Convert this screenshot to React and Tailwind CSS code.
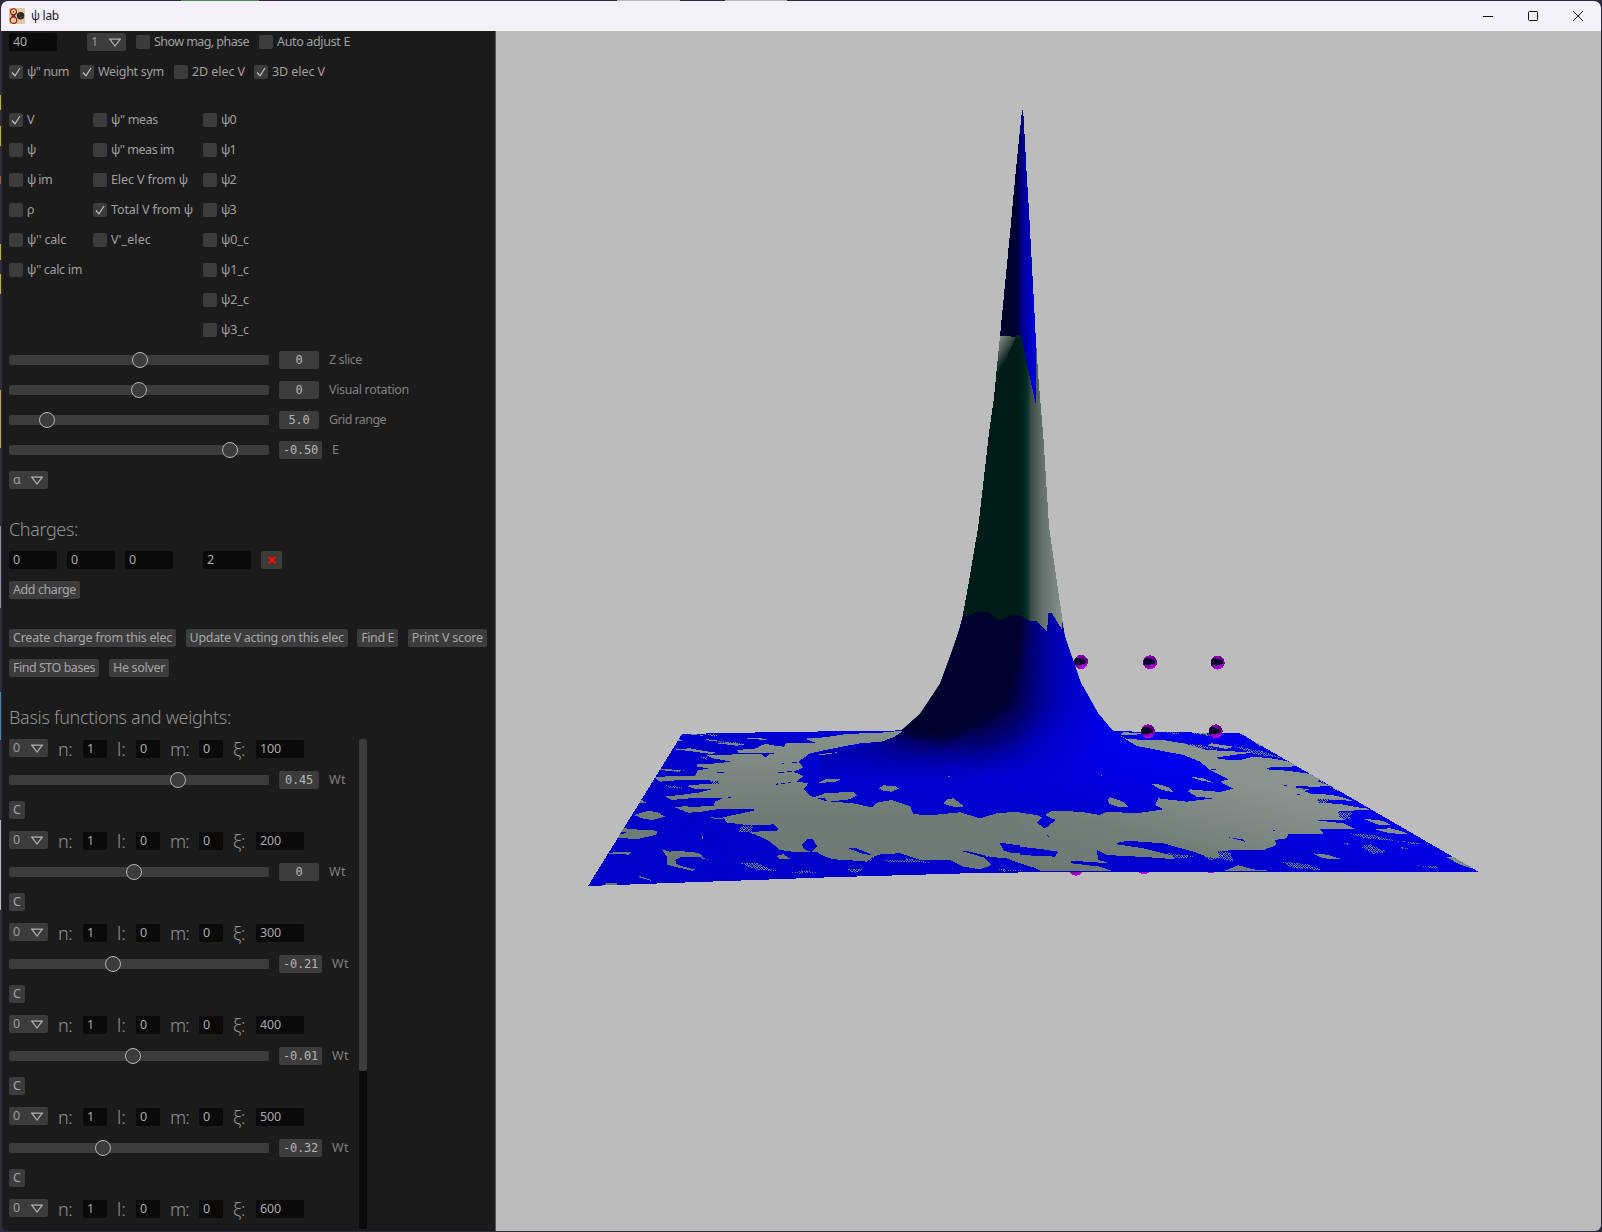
import React, { useLayoutEffect, useRef, useState } from "react";

/* Text whose tracking is tuned so that it occupies a given width. */
function Fit({ w, className = "", children }) {
  const ref = useRef(null);
  const [ls, setLs] = useState(0);
  useLayoutEffect(() => {
    const natural = ref.current.getBoundingClientRect().width;
    setLs((w - natural) / String(children).length);
  }, []);
  return (
    <span ref={ref} className={"whitespace-pre " + className} style={{ letterSpacing: ls + "px" }}>
      {children}
    </span>
  );
}

function Check({ on, label, w, className = "" }) {
  return (
    <div className={"flex h-[18px] items-center gap-1 " + className}>
      <span className="h-[14px] w-[14px] shrink-0 rounded-[2px] bg-[#3c3c3c]">
        {on && (
          <svg viewBox="0 0 14 14" className="h-[14px] w-[14px]" fill="none" stroke="#c0c0c0" strokeWidth="1.2">
            <path d="M3 7.5L6 10.8L11 3" />
          </svg>
        )}
      </span>
      <Fit w={w} className="text-[#a0a0a0]">{label}</Fit>
    </div>
  );
}

function Field({ value, w, className }) {
  return (
    <div className={"flex h-[18px] items-center rounded-[2px] bg-[#0a0a0a] pl-1 text-[#a8a8a8] " + className}>
      <Fit w={w}>{value}</Fit>
    </div>
  );
}

function Select({ value, className = "w-[39px]" }) {
  return (
    <div className={"flex h-[18px] items-center justify-between rounded-[2px] bg-[#3c3c3c] pl-1 pr-[5px] text-[#9c9c9c] " + className}>
      <Fit w={7}>{value}</Fit>
      <svg viewBox="0 0 12 9" className="h-[9px] w-[12px]" fill="none" stroke="#b0b0b0" strokeWidth="1.2">
        <path d="M0.8 1.2H11.2L6 8Z" />
      </svg>
    </div>
  );
}

function Button({ label, w, className }) {
  return (
    <button className={"flex h-[18px] items-center rounded-[2px] bg-[#3c3c3c] pl-1 text-[#a6a6a6] " + className}>
      <Fit w={w}>{label}</Fit>
    </button>
  );
}

function Slider({ at, value, label, w }) {
  const wide = value.length > 4;
  return (
    <div className="flex h-[18px] items-center gap-[10px]">
      <div className="relative h-[10px] w-[260px] rounded-[2px] bg-[#3c3c3c]">
        <span
          className="absolute top-[-3px] h-4 w-4 rounded-full border-[1.3px] border-[#b4b4b4] bg-[#3c3c3c]"
          style={{ left: at - 17 + "px" }}
        />
      </div>
      <div
        className={
          "flex h-[18px] items-center justify-center rounded-[2px] bg-[#3c3c3c] font-['DejaVu_Sans_Mono',monospace] text-[12px] text-[#b4b4b4] " +
          (wide ? "w-[43px]" : "w-[40px]")
        }
      >
        <Fit w={value.length * 7}>{value}</Fit>
      </div>
      <Fit w={w} className="text-[#808080]">{label}</Fit>
    </div>
  );
}

function Big({ w, className, children }) {
  return (
    <div className={"text-[18px] font-light leading-5 text-[#929292] " + className}>
      <Fit w={w}>{children}</Fit>
    </div>
  );
}

function Basis({ xi, at, value }) {
  return (
    <div className="flex shrink-0 flex-col gap-3">
      <div className="flex h-5 items-start">
        <Select value="0" />
        <Big w={14} className="ml-[10px] w-[25px]">n:</Big>
        <Field value="1" w={7} className="mt-px w-6" />
        <Big w={9} className="ml-[10px] w-[19px]">l:</Big>
        <Field value="0" w={7} className="mt-px w-6" />
        <Big w={19} className="ml-[10px] w-[29px]">m:</Big>
        <Field value="0" w={7} className="mt-px w-6" />
        <Big w={12} className="ml-[10px] w-[23px]">ξ:</Big>
        <Field value={xi} w={21} className="mt-px w-12" />
      </div>
      {value && <Slider at={at} value={value} label="Wt" w={17} />}
      {value && <Button label="C" w={8} className="w-4" />}
    </div>
  );
}

const columns = [
  {
    cls: "w-[84px]",
    items: [["V", 8, true], ["ψ", 9], ["ψ im", 25], ["ρ", 7], ["ψ'' calc", 39], ["ψ'' calc im", 55]],
  },
  {
    cls: "w-[110px]",
    items: [["ψ'' meas", 47], ["ψ'' meas im", 63], ["Elec V from ψ", 77], ["Total V from ψ", 82, true], ["V'_elec", 40]],
  },
  {
    cls: "w-[80px]",
    items: [["ψ0", 15], ["ψ1", 15], ["ψ2", 15], ["ψ3", 15], ["ψ0_c", 28], ["ψ1_c", 28], ["ψ2_c", 28], ["ψ3_c", 28]],
  },
];

const bases = [
  ["100", 178, "0.45"],
  ["200", 134, "0"],
  ["300", 113, "-0.21"],
  ["400", 133, "-0.01"],
  ["500", 102.5, "-0.32"],
  ["600", 0, null],
];

function Panel() {
  return (
    <div className="flex h-[1200px] w-[493px] shrink-0 flex-col rounded-bl-[6px] bg-[#1b1b1b] pl-[7px] pt-[2px] font-['Noto_Sans',sans-serif] text-[12.5px] leading-[18px]">
      <div className="flex h-[18px]">
        <Field value="40" w={14} className="w-12" />
        <Select value="1" className="ml-[30px] w-[39px]" />
        <Check label="Show mag, phase" w={95} className="ml-[10px] w-[113px]" />
        <Check label="Auto adjust E" w={73} className="ml-[10px]" />
      </div>
      <div className="mt-3 flex h-[18px]">
        <Check on label="ψ'' num" w={42} className="w-[71px]" />
        <Check on label="Weight sym" w={66} className="w-[94px]" />
        <Check label="2D elec V" w={53} className="w-[80px]" />
        <Check on label="3D elec V" w={53} />
      </div>
      <div className="mt-[30px] flex h-[228px]">
        {columns.map((c, i) => (
          <div key={i} className={"flex flex-col gap-3 " + c.cls}>
            {c.items.map(([label, w, on]) => (
              <Check key={label} label={label} w={w} on={on} />
            ))}
          </div>
        ))}
      </div>
      <div className="mt-3 flex flex-col gap-3">
        <Slider at={140} value="0" label="Z slice" w={33} />
        <Slider at={139} value="0" label="Visual rotation" w={80} />
        <Slider at={47} value="5.0" label="Grid range" w={57} />
        <Slider at={230} value="-0.50" label="E" w={7} />
        <Select value="α" />
      </div>
      <h2 className="mt-7 h-[22px] text-[18px] font-light leading-[24px] text-[#929292]">
        <Fit w={69}>Charges:</Fit>
      </h2>
      <div className="mt-3 flex h-[18px] gap-[10px]">
        <Field value="0" w={7} className="w-12" />
        <Field value="0" w={7} className="w-12" />
        <Field value="0" w={7} className="w-12" />
        <Field value="2" w={7} className="ml-5 w-12" />
        <button className="flex h-[18px] w-[21px] items-center justify-center rounded-[2px] bg-[#3c3c3c]">
          <svg viewBox="0 0 8 8" className="h-2 w-2" stroke="#f50808" strokeWidth="2.3">
            <path d="M0.8 0.8L7.2 7.2M7.2 0.8L0.8 7.2" />
          </svg>
        </button>
      </div>
      <Button label="Add charge" w={63} className="mt-3 w-[71px]" />
      <div className="mt-[30px] flex h-[18px] gap-[9.6px]">
        <Button label="Create charge from this elec" w={159} className="w-[167px]" />
        <Button label="Update V acting on this elec" w={154} className="w-[162px]" />
        <Button label="Find E" w={33} className="w-[41px]" />
        <Button label="Print V score" w={71} className="w-[79px]" />
      </div>
      <div className="mt-3 flex h-[18px] gap-[10px]">
        <Button label="Find STO bases" w={82} className="w-[90px]" />
        <Button label="He solver" w={52} className="w-[60px]" />
      </div>
      <h2 className="mt-7 h-[22px] text-[18px] font-light leading-[24px] text-[#929292]">
        <Fit w={222}>Basis functions and weights:</Fit>
      </h2>
      <div className="mt-3 flex h-[490px]">
        <div className="flex w-[350px] flex-col gap-3">
          {bases.map(([xi, at, value]) => (
            <Basis key={xi} xi={xi} at={at} value={value} />
          ))}
        </div>
        <div className="h-[490px] w-2 rounded-[2px] bg-[#0a0a0a]">
          <div className="h-[332px] w-2 rounded-[2px] bg-[#3c3c3c]" />
        </div>
      </div>
    </div>
  );
}

/* Left part of the surface, in a frame scaled 3:1 with its origin at (580,700). */
const greyLeft = [
  "970,92 905,98 800,102 735,112 675,116 710,130 620,128 612,140 590,138 560,132 545,135 530,145 470,150 475,158 540,160 470,163 380,166 400,175 450,184 420,190 350,192 352,200 385,205 352,212 345,228 290,228 222,231 240,245 300,240 420,242 415,252 340,254 320,258 345,266 395,268 360,277 300,285 255,290 275,300 350,293 430,294 405,305 400,318 350,320 285,320 320,337 365,335 410,328 520,327 522,332 470,343 430,352 440,368 480,372 500,376 530,375 590,382 590,392 505,396 540,410 570,425 600,450 650,457 710,455 730,468 760,478 800,480 860,485 880,470 905,462 960,460 1020,480 1110,480 1150,500 1200,508 1235,495 1210,472 1145,453 1220,470 1280,475 1320,490 1350,500 1410,506 1410,380 1395,385 1370,350 1310,335 1250,340 1200,355 1140,337 1060,345 1000,343 990,318 935,300 890,308 875,322 820,310 735,303 690,288 670,268 685,250 650,245 670,228 640,215 670,203 655,185 690,160 760,145 840,130 905,125 940,112",
  "285,148 330,145 380,154 408,158 395,162 335,154", "307,101 360,104 375,108", "230,205 270,208 320,214 280,214 240,210",
  "163,345 205,332 235,338 255,350 215,360 185,355", "120,378 145,387 230,392 232,400 225,405 170,418 110,412",
  "168,308 185,300 202,310", "285,322 320,318 360,330 330,340", "285,118 300,118 310,123 290,123",
  "245,447 270,456 275,452 340,456 362,462 370,473 340,470 300,472 285,480 290,492 310,500 350,510 335,512 260,494 262,472",
  "110,456 155,457 145,464 80,460", "80,550 110,549 110,555 75,555", "590,468 610,462 632,478 600,478",
  "175,531 215,543 208,538 180,528", "365,472 388,480 360,474", "490,113 540,114 560,119 510,118",
  "375,118 420,120 395,124", "410,130 440,127 495,133 470,137", "715,248 735,238 785,236 765,247", "735,295 700,292 735,280 820,275 832,286 810,298 745,305",
  "897,265 910,256 948,259 957,266 935,275 910,272", "1090,310 1103,298 1120,295 1153,319 1130,322 1110,318",
  "1103,228 1110,228 1110,231 1103,231", "715,163 780,156 750,162 718,166", "390,351 440,357 410,358",
  "1395,345 1410,336 1410,352", "366,408 370,408 370,417 366,417",
];
const blueLeft = [
  "520,384 535,376 580,373 597,388 570,394 522,392", "665,435 680,418 698,417 712,440 695,456 675,450",
  "805,445 830,445 880,466 850,462", "1258,428 1290,432 1410,450 1410,462 1290,458 1272,452",
  "545,162 567,163 556,173", "590,217 665,211 600,219", "450,187 400,187 400,184 450,184",
  "405,218 432,216 430,219", "580,253 595,250 595,254", "430,293 457,292 440,295", "905,470 960,462 1005,478 920,478",
  "1140,452 1160,453 1230,470 1190,466", "690,165 720,158 700,168", "1380,370 1410,362 1400,385",
  "505,159 582,159 582,162 505,162", "593,192 612,190 612,193", "632,187 650,186 650,189", "600,251 635,246 632,250",
  "112,398 140,396 130,402 112,403", "345,217 350,210 335,226",
];
const hatchLeft = [
  "400,123 460,126 495,133 450,136", "480,490 530,488 560,502 590,513 530,510", "905,480 1000,478 1050,488 930,486",
  "800,507 850,508 825,520", "630,517 680,512 710,518 660,521", "485,378 520,376 515,395 475,396", "1255,507 1330,512 1270,515",
  "390,240 425,242 420,256 395,250", "360,172 385,172 380,180", "370,103 430,104 400,108", "255,256 320,262 270,264",
  "680,115 705,116 700,122", "860,465 885,470 870,484", "245,206 320,212 290,216", "560,507 590,512 560,514",
];

/* Right part, same scale, origin at (1020,700). */
const greyRight = [
  "300,107 325,118 430,120 500,132 560,150 620,153 700,158 640,165 590,172 600,178 660,180 700,170 760,176 810,186 850,198 740,203 740,208 800,212 860,220 905,230 895,245 925,255 965,263 920,258 870,262 830,262 870,270 850,272 875,282 930,284 960,290 1000,303 920,298 895,297 895,308 960,312 1030,325 1070,327 1010,331 950,335 960,352 980,360 880,360 970,370 1005,387 900,387 912,403 805,402 800,415 765,420 770,435 730,450 590,452 600,475 550,470 520,460 430,430 320,422 285,432 370,445 450,465 465,478 390,472 260,465 230,450 235,480 270,490 150,482 155,490 240,500 275,512 130,512 60,512 0,480 0,338 50,345 65,352 95,333 180,335 240,345 260,335 350,340 430,328 405,315 415,295 500,305 580,295 530,290 505,275 510,268 600,276 640,266 600,245 625,238 570,210 540,185 490,165 350,138",
  "393,252 410,251 445,262 460,277 420,268", "262,300 270,292 305,303 326,320 300,322 268,312", "510,230 550,235 580,248 545,242",
  "310,97 370,99 350,104 300,106", "1065,388 1110,385 1140,392 1165,402 1110,400", "1030,356 1085,362 1112,374 1080,376",
  "1278,470 1310,472 1330,482 1355,505 1320,494", "880,460 920,464 968,478 930,478 900,472", "625,508 655,496 700,508 760,513 610,513",
  "1078,338 1120,350 1125,358 1090,348", "520,98 560,100 560,104", "575,130 640,140 620,147 560,136",
  "700,125 730,134 760,146 720,138", "745,145 790,162 760,157", "830,188 875,212 850,206", "970,281 1005,280 1035,298 1000,294",
  "930,262 985,274 960,275", "1035,320 1075,326 1050,324", "243,225 246,225 246,228 243,228",
];
const blueRight = [
  "50,368 75,345 107,360 75,386", "0,440 60,447 115,455 105,470 0,465", "625,412 670,418 675,425",
  "285,430 320,423 430,430 520,455 560,470 600,480 500,470 450,455 380,436", "735,203 800,206 870,215 800,212",
  "586,173 610,173 655,178 600,177", "570,207 620,211 580,211", "150,485 200,488 280,490 210,495",
  "80,402 90,412 80,408", "787,255 800,256 800,259", "820,260 860,258 870,264 835,265", "817,281 840,281 840,285", "650,164 668,162 668,165",
  "755,391 775,392 775,394",
];
const hatchRight = [
  "890,296 925,298 920,310 895,308", "950,335 1000,338 985,358 960,352", "590,452 630,458 640,485 600,476",
  "1020,440 1050,432 1100,456 1060,461", "785,485 860,492 905,510 820,505", "895,235 925,245 905,252",
  "990,400 1060,405 1140,425 1030,414", "1190,496 1255,500 1250,508", "820,262 870,268 850,274",
  "520,100 560,102 610,110 560,107", "640,138 720,152 790,175 700,162", "550,465 600,472 570,482", "440,458 530,470 460,476",
  "435,97 490,98 470,102", "1140,440 1170,446 1150,448", "490,130 560,138 600,150 530,142", "1140,422 1230,434 1180,432",
  "960,428 1000,432 980,434",
];

const plane = "682,734 780,732 903,730.4 1113,731.2 1240,733.3 1479,872 1050,872 967,873.3 830,877.3 663,883.3 588,886";
const mound =
  "964,612 959.3,630 950,657 940,684 920,714 903,729 892,737 880,742 850,748 820,752 820,800 1180,800 1190,765 1183,757 1160,749 1136,746 1113,731 1098,713 1081,683 1065,636.7 1062,620 1060,612";
const spheres = [[1081, 662], [1150, 662.3], [1217.7, 662.6]];
const frontSpheres = [[1148, 731.3], [1215.7, 731.3]];
const lowSpheres = [[1076, 868.7], [1144, 867.5], [1211, 866.5]];

function Ball({ c }) {
  return (
    <g transform={`translate(${c[0]} ${c[1]})`}>
      <circle r="7" fill="url(#ball)" />
      <path d="M-6.9 -1.5C-6 -4.6 -3 -5.2 0 -3.6L5.5 -1L5.2 1L-1 3L-6.2 2.6Z" fill="#05002c" />
    </g>
  );
}

function Scene() {
  return (
    <svg viewBox="496 31 1105 1200" className="block h-[1200px] w-[1105px] rounded-br-[6px] bg-[#bcbcbc]" shapeRendering="crispEdges">
      <defs>
        <linearGradient id="blue" gradientUnits="userSpaceOnUse" x1="1000" y1="875" x2="1035" y2="735">
          <stop offset="0" stopColor="#0000cb" />
          <stop offset="0.55" stopColor="#0000d0" />
          <stop offset="1" stopColor="#0000ea" />
        </linearGradient>
        <linearGradient id="grey" gradientUnits="userSpaceOnUse" x1="0" y1="500" x2="0" y2="100">
          <stop offset="0" stopColor="#6d7974" />
          <stop offset="0.4" stopColor="#707c76" />
          <stop offset="1" stopColor="#86918b" />
        </linearGradient>
        <linearGradient id="greyR" gradientUnits="userSpaceOnUse" x1="60" y1="500" x2="170" y2="100">
          <stop offset="0" stopColor="#6d7974" />
          <stop offset="0.4" stopColor="#727e78" />
          <stop offset="1" stopColor="#89948e" />
        </linearGradient>
        <linearGradient id="tip" gradientUnits="userSpaceOnUse" x1="1013" y1="0" x2="1034" y2="0">
          <stop offset="0" stopColor="#00002d" />
          <stop offset="0.2" stopColor="#00003c" />
          <stop offset="0.5" stopColor="#000098" />
          <stop offset="0.8" stopColor="#0000c0" />
          <stop offset="1" stopColor="#0000dc" />
        </linearGradient>
        <linearGradient id="body" gradientUnits="userSpaceOnUse" x1="1018" y1="0" x2="1062" y2="0">
          <stop offset="0" stopColor="#001c17" />
          <stop offset="0.16" stopColor="#002825" />
          <stop offset="0.22" stopColor="#0c302c" />
          <stop offset="0.3" stopColor="#3c4c47" />
          <stop offset="0.55" stopColor="#63706b" />
          <stop offset="1" stopColor="#86918b" />
        </linearGradient>
        <linearGradient id="wedge" gradientUnits="userSpaceOnUse" x1="997" y1="340" x2="1013" y2="351">
          <stop offset="0" stopColor="#84908a" />
          <stop offset="0.5" stopColor="#4c5955" />
          <stop offset="1" stopColor="#001c17" />
        </linearGradient>
        <linearGradient id="slope" gradientUnits="userSpaceOnUse" x1="1015" y1="0" x2="1120" y2="0">
          <stop offset="0" stopColor="#000078" />
          <stop offset="0.25" stopColor="#0000a0" />
          <stop offset="0.5" stopColor="#0000c4" />
          <stop offset="0.75" stopColor="#0000dc" />
          <stop offset="1" stopColor="#0000ee" />
        </linearGradient>
        <linearGradient id="fade" x1="0" y1="0" x2="0" y2="1">
          <stop offset="0.55" stopColor="#fff" />
          <stop offset="0.95" stopColor="#000" />
        </linearGradient>
        <mask id="fadeMask" maskUnits="userSpaceOnUse" x="800" y="600" width="400" height="200">
          <rect x="800" y="600" width="400" height="190" fill="url(#fade)" />
        </mask>
        <linearGradient id="ball" x1="0" y1="0" x2="0.3" y2="1">
          <stop offset="0" stopColor="#b400dc" />
          <stop offset="0.5" stopColor="#50006e" />
          <stop offset="1" stopColor="#b800e0" />
        </linearGradient>
        <pattern id="hatch" width="15" height="12" patternUnits="userSpaceOnUse">
          <path d="M0 0H3V3H0ZM6 0H9V3H6ZM3 3H6V6H3ZM9 3H15V6H9ZM0 6H3V9H0ZM9 6H12V9H9ZM3 9H9V12H3ZM12 9H15V12H12Z" fill="#6f7b75" />
        </pattern>
        <clipPath id="planeClip"><polygon points={plane} /></clipPath>
        <clipPath id="moundClip"><polygon points={mound} /></clipPath>
        <filter id="soft" x="-30%" y="-30%" width="160%" height="160%"><feGaussianBlur stdDeviation="5" /></filter>
        <filter id="softer" x="-40%" y="-40%" width="180%" height="180%"><feGaussianBlur stdDeviation="13" /></filter>
      </defs>

      {lowSpheres.map((c, i) => <Ball key={i} c={c} />)}
      {spheres.map((c, i) => <Ball key={i} c={c} />)}

      <polygon points={plane} fill="url(#blue)" />
      <polygon points={mound} fill="url(#blue)" />
      <g clipPath="url(#moundClip)">
        <rect x="800" y="600" width="400" height="190" fill="url(#slope)" mask="url(#fadeMask)" />
        <polygon points="963,590 1030,590 1030,690 1022,728 990,752 925,752 870,744 900,725 940,684" fill="#00003c" opacity="0.7" filter="url(#softer)" />
        <polygon points="955,580 1023,580 1024,640 1019,675 1011,706 982,726 945,741 915,738 895,732 880,720 940,670" fill="#00002e" filter="url(#soft)" />
        <polygon points="950,600 1019,600 1018,640 1012,675 1004,702 976,718 945,733 918,732 912,720 940,675" fill="#00002e" />
      </g>

      <g clipPath="url(#planeClip)">
        <g transform="translate(580 700) scale(0.33333)">
          {greyLeft.map((p, i) => <polygon key={i} points={p} fill="url(#grey)" />)}
          {blueLeft.map((p, i) => <polygon key={i} points={p} fill="#0000cc" />)}
          {hatchLeft.map((p, i) => <polygon key={i} points={p} fill="url(#hatch)" />)}
        </g>
        <g transform="translate(1020 700) scale(0.33333)">
          {greyRight.map((p, i) => <polygon key={i} points={p} fill="url(#greyR)" />)}
          {blueRight.map((p, i) => <polygon key={i} points={p} fill="#0000d4" />)}
          {hatchRight.map((p, i) => <polygon key={i} points={p} fill="url(#hatch)" />)}
        </g>
      </g>

      <polygon
        points="1000,336 994,397 989,433 983.3,483 978.3,526 968.3,585 963.3,612.5 966,617 975,613 982,611.5 989,613 1000,620.5 1012,615 1019,615 1030,621 1037,621 1047,631.5 1048.5,613 1052,613 1062,630 1062.3,618.5 1055,569 1049,526 1043.3,436 1038.3,376 1035.7,336"
        fill="url(#body)"
      />
      <polygon points="1000,336 1017,335 1009,352 1000,376 993,407 989,433 994,397" fill="url(#wedge)" />
      <polygon
        points="1022,110 1023.2,110 1026.7,174 1029,211 1033.3,290 1035.7,336 1035.7,404 1021,337 1000,336 1010,233 1015.7,172"
        fill="url(#tip)"
      />
      <path d="M1016 338V335H1021V338Z" fill="#002a22" />
      {frontSpheres.map((c, i) => <Ball key={i} c={c} />)}
    </svg>
  );
}

function TitleBar() {
  return (
    <div className="flex h-[30px] items-center rounded-t-[7px] bg-[#f4f1fa] pl-2">
      <svg viewBox="0 0 16 16" className="h-4 w-4">
        <rect width="16" height="16" fill="#e3c9a0" />
        <g fill="none" stroke="#8c1a14" strokeWidth="1.1">
          <circle cx="4.5" cy="3.7" r="3" />
          <circle cx="4.5" cy="12.2" r="3.2" />
          <path d="M2.5 6.5L6.5 9.3M6.5 6.5L2.5 9.3" />
        </g>
        <circle cx="4.5" cy="3.7" r="0.7" fill="#8c1a14" />
        <circle cx="11.6" cy="7.8" r="3.7" fill="#2b2722" />
        <path d="M10 6.4h1M12.4 8.6h1M11 9.6h1" stroke="#77705f" />
      </svg>
      <div className="ml-[6px] font-['Noto_Sans',sans-serif] text-[12px] text-[#1a1a1a]">
        <Fit w={28}>ψ lab</Fit>
      </div>
      <div className="ml-auto mr-[18px] flex items-center gap-[35px]">
        <svg viewBox="0 0 10 10" className="h-[10px] w-[10px]" stroke="#111" fill="none"><path d="M0 5.5H10" /></svg>
        <svg viewBox="0 0 10 10" className="h-[10px] w-[10px]" stroke="#111" fill="none"><rect x="0.5" y="0.5" width="9" height="9" rx="1" /></svg>
        <svg viewBox="0 0 10 10" className="h-[10px] w-[10px]" stroke="#111" fill="none"><path d="M0 0L10 10M10 0L0 10" /></svg>
      </div>
    </div>
  );
}

export default function App() {
  return (
    <div className="flex h-[1232px] w-[1602px] flex-col overflow-hidden bg-[#2e2a3c]">
      <div className="flex h-px shrink-0">
        <span className="ml-[181px] h-px w-[78px] bg-[#4a9050]" />
        <span className="ml-[358px] h-px w-[63px] bg-[#b8b8bc]" />
        <span className="ml-[45px] h-px w-[62px] bg-[#b8b8bc]" />
      </div>
      <div className="flex">
        <div className="flex w-px shrink-0 flex-col">
          <span className="mt-[94px] h-[15px] w-px bg-[#c0b41e]" />
          <span className="mt-4 h-5 w-px bg-[#c0b41e]" />
          <span className="mt-[30px] h-2 w-px bg-[#a0582c]" />
          <span className="mt-[60px] h-4 w-px bg-[#c0b41e]" />
          <span className="mt-[14px] h-5 w-px bg-[#c0b41e]" />
          <span className="mt-24 h-[58px] w-px bg-[#c0a050]" />
          <span className="mt-[78px] h-[82px] w-px bg-[#8c8c9c]" />
          <span className="mt-[84px] h-[48px] w-px bg-[#3c8cb0]" />
          <span className="mt-[80px] h-[90px] w-px bg-[#b4b4b4]" />
        </div>
        <div className="flex w-[1600px] flex-col">
          <TitleBar />
          <div className="flex pl-px">
            <Panel />
            <div className="h-[1200px] w-px bg-[#555]" />
            <Scene />
          </div>
        </div>
      </div>
    </div>
  );
}
